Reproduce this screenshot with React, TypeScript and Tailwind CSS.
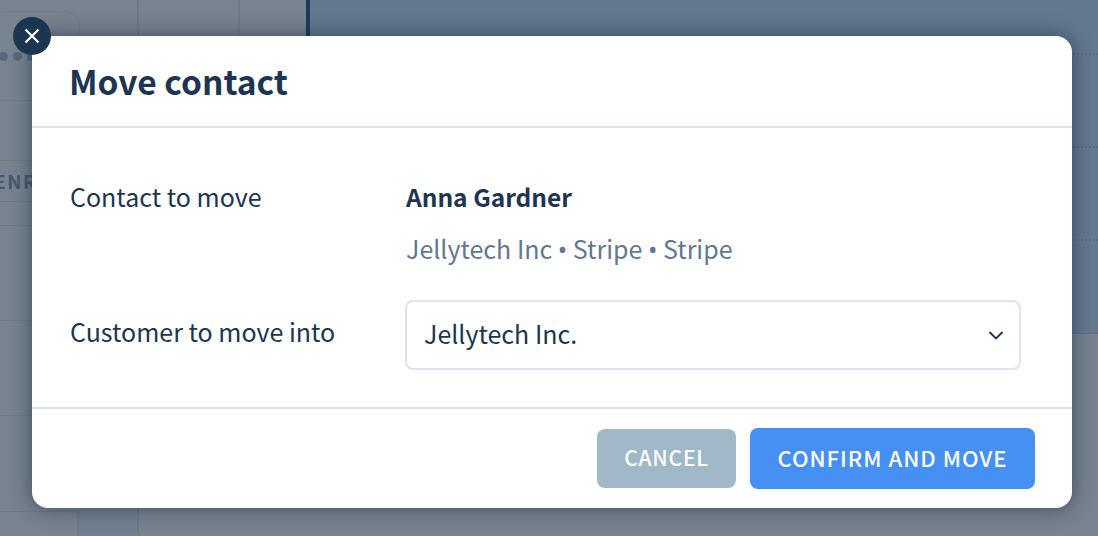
import React from "react";

const font = { fontFamily: '"Noto Sans CJK SC", "Noto Sans", sans-serif' };

function Bullet() {
  return <span className="font-['Noto_Sans']">•</span>;
}

function Dotted() {
  return <div className="h-[93px] border-b-2 border-dotted border-[#5a6d84]" />;
}

export default function App() {
  return (
    <div className="relative w-[1098px] h-[536px] overflow-hidden bg-[#77838f]" style={font}>
      <div className="flex h-full">
        <div className="w-[306px] shrink-0 h-full flex flex-col">
          <div className="h-[101px] flex border-b border-[#6c7a88]">
            <div className="w-[137px] pt-[11px]">
              <div className="-ml-[10px] w-[90px] h-[90px] rounded-t-[14px] border border-[#6f7d8b] pt-[40px] pl-[8px] flex gap-[5px]">
                <span className="w-[9px] h-[9px] rounded-full bg-[#55697e]" />
                <span className="w-[9px] h-[9px] rounded-full bg-[#55697e]" />
                <span className="w-[9px] h-[9px] rounded-full bg-[#55697e]" />
              </div>
            </div>
            <div className="w-[101px] border-l-2 border-[#6c7a88]" />
            <div className="flex-1 border-l-2 border-[#6c7a88]" />
          </div>
          <div className="h-[60px] border-b border-[#6c7a88]" />
          <div className="h-[41px] border-b border-[#6c7a88] text-[#47596e] text-[19px] font-semibold tracking-[1.5px] flex items-center">
            <span className="-ml-[6px]">ENR</span>
          </div>
          <div className="h-[24px] border-b border-[#6c7a88]" />
          <div className="h-[95px] border-b border-[#6c7a88]" />
          <div className="h-[95px] border-b border-[#6c7a88]" />
          <div className="flex-1 flex">
            <div className="w-[79px] flex flex-col">
              <div className="h-[96px] border-b border-[#6c7a88]" />
              <div className="flex-1 border-r-2 border-[#6c7a88]" />
            </div>
            <div className="w-[58px] bg-[#72808f]" />
            <div className="flex-1 -mb-[10px] border-l-2 border-b-2 border-[#66788b] rounded-bl-[16px] bg-[#77838f]" />
          </div>
        </div>
        <div className="flex-1 flex flex-col">
          <div className="h-[334px] flex bg-[#64788f] border-b border-[#5d7087]">
            <div className="w-[4px] bg-[#1f3a5a]" />
            <div className="flex-1 -mt-[38px]">
              <Dotted />
              <Dotted />
              <Dotted />
            </div>
          </div>
          <div className="flex-1 bg-[#77838f]" />
        </div>
      </div>

      <div className="absolute left-[32px] top-[36px] w-[1040px] h-[472px] bg-white rounded-[16px] shadow-[0_0_20px_rgba(20,35,55,0.6)] flex flex-col text-[#1d3550]">
        <div className="h-[92px] shrink-0 border-b-2 border-[#dfe5ee] pl-[37px] pb-[1px] flex items-center">
          <h1 className="text-[33.5px] leading-none font-semibold">Move contact</h1>
        </div>
        <div className="h-[281px] shrink-0 border-b-2 border-[#dfe5ee] pl-[38px] pr-[51px] pt-[51px] text-[25px] leading-[34px]">
          <div className="flex">
            <div className="w-[336px]">Contact to move</div>
            <div className="flex flex-col">
              <span className="pt-[1px] font-semibold text-[24.5px]">Anna Gardner</span>
              <span className="mt-[17px] text-[#62788f]">
                Jellytech Inc <Bullet /> Stripe <Bullet /> Stripe
              </span>
            </div>
          </div>
          <div className="flex items-center mt-[34px]">
            <div className="w-[335px] pb-[8px]">Customer to move into</div>
            <div className="flex-1 h-[70px] rounded-[8px] border-2 border-[#dfe5ee] pl-[17px] pr-[15px] flex items-center justify-between">
              <span className="pb-[4px]">Jellytech Inc.</span>
              <svg width="16" height="10" viewBox="0 0 16 10" fill="none" stroke="#1d3550" strokeWidth="1.8">
                <path d="M1.5 2l6.5 6.5L14.5 2" />
              </svg>
            </div>
          </div>
        </div>
        <div className="flex-1 flex justify-end items-start pt-[19px] pr-[37px] gap-[14px]">
          <button className="mt-[1px] w-[139px] h-[59px] pb-[2px] rounded-[8px] bg-[#a0b8c7] text-white text-[21px] font-medium tracking-[0.8px]">CANCEL</button>
          <button className="w-[285px] h-[61px] pb-[2px] rounded-[8px] bg-[#468ff3] text-white text-[22px] font-medium tracking-[1px]">CONFIRM AND MOVE</button>
        </div>
      </div>

      <div className="absolute left-[13px] top-[17px] w-[38px] h-[38px] rounded-full bg-[#1d3550] flex items-center justify-center">
        <svg width="16" height="16" viewBox="0 0 16 16" fill="none" stroke="#fff" strokeWidth="2.2">
          <path d="M1.5 1.5l13 13M14.5 1.5l-13 13" />
        </svg>
      </div>
    </div>
  );
}
